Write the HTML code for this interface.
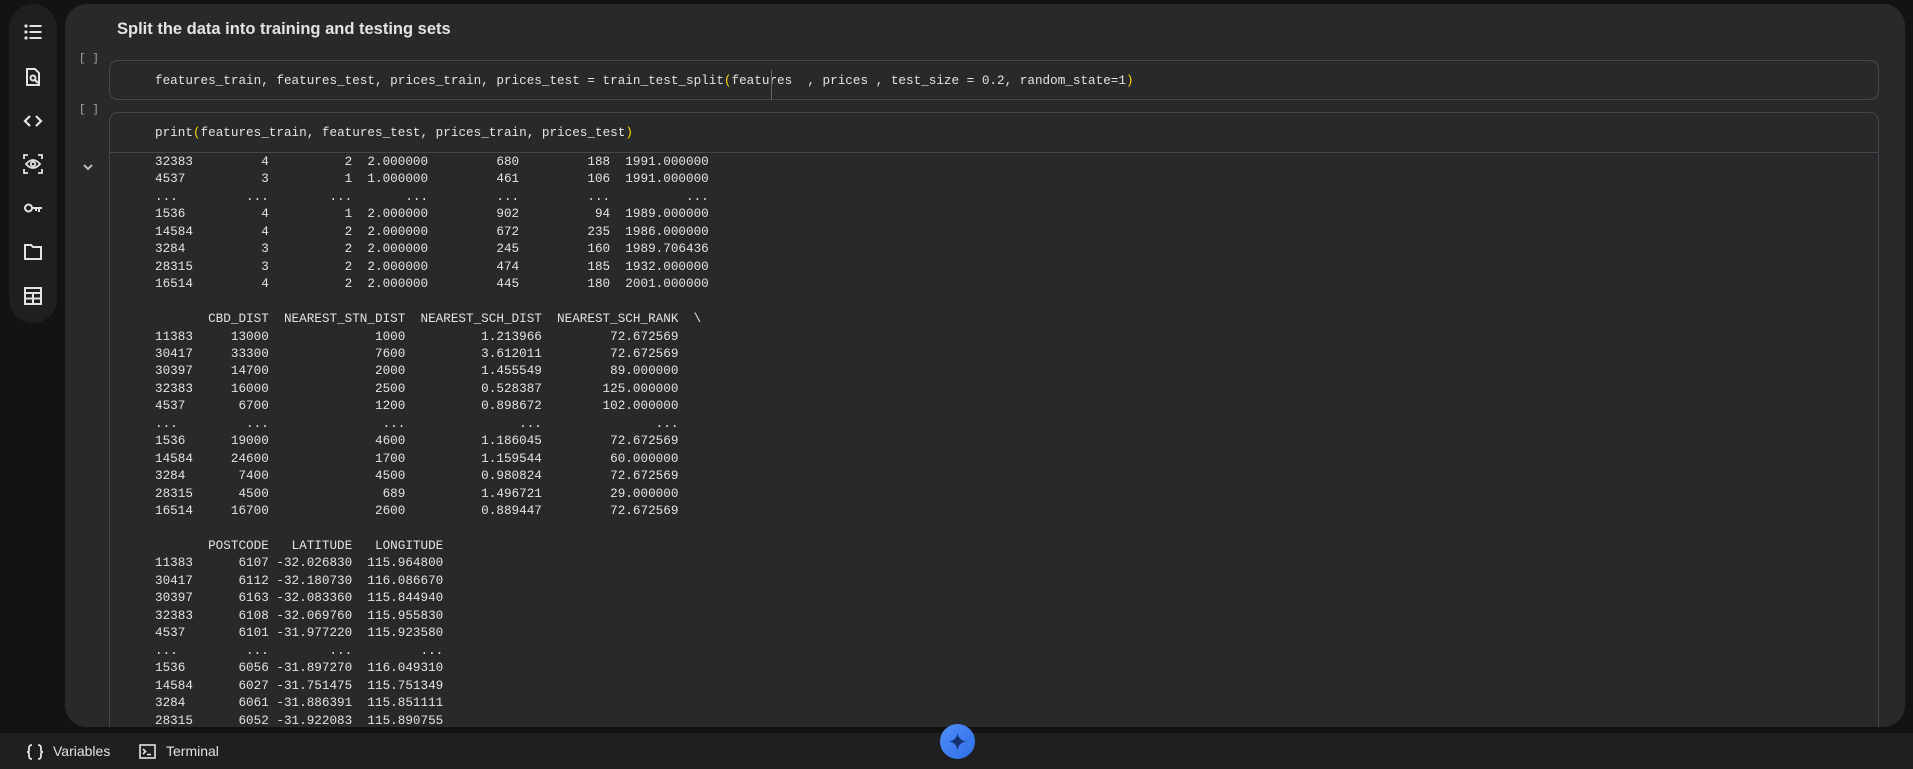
<!DOCTYPE html>
<html><head><meta charset="utf-8"><style>
*{margin:0;padding:0;box-sizing:border-box}
html,body{width:1913px;height:769px;overflow:hidden;background:#131314;font-family:"Liberation Sans",sans-serif;color:#e3e3e3}
#side{position:absolute;left:9px;top:4px;width:48px;height:319px;background:#1e1f20;border-radius:24px}
#side svg{position:absolute;left:14px;width:20px;height:20px}
#panel{position:absolute;left:65px;top:4px;width:1840px;height:723px;background:#28292b;border-radius:22px;overflow:hidden}
.title{position:absolute;left:52px;top:16px;font-size:16.5px;font-weight:bold;color:#e3e3e3}
.br{position:absolute;left:14px;font-family:"Liberation Mono",monospace;font-size:11px;color:#aaa}
.cell{position:absolute;left:44px;width:1770px;border:1px solid #46474a;border-radius:9px}
.code{position:absolute;left:45px;font-family:"Liberation Mono",monospace;font-size:12.65px;color:#e3e3e3;white-space:pre}
.y{color:#ffd700}
pre{position:absolute;left:45px;top:40px;font-family:"Liberation Mono",monospace;font-size:12.65px;line-height:17.45px;color:#e3e3e3}
#bot{position:absolute;left:0;top:733px;width:1913px;height:36px;background:#1e1f20;font-size:14px}
</style></head><body>
<div id="side">
<svg style="top:18px" viewBox="0 0 20 20" fill="#e3e3e3"><circle cx="3" cy="4" r="1.6"/><circle cx="3" cy="10" r="1.6"/><circle cx="3" cy="16" r="1.6"/><rect x="6.5" y="3" width="12" height="2"/><rect x="6.5" y="9" width="12" height="2"/><rect x="6.5" y="15" width="12" height="2"/></svg>
<svg style="top:63px" viewBox="0 0 20 20" fill="none" stroke="#e3e3e3" stroke-width="2"><path d="M4 2h8l4 4v12H4z"/><circle cx="10" cy="11" r="2.5"/><path d="M12 13l3 3"/></svg>
<svg style="top:107px" viewBox="0 0 20 20" fill="none" stroke="#e3e3e3" stroke-width="2.2"><path d="M7 5l-5 5 5 5M13 5l5 5-5 5"/></svg>
<svg style="top:150px" viewBox="0 0 20 20" fill="none" stroke="#e3e3e3" stroke-width="1.8"><path d="M1 5V1h4M15 1h4v4M19 15v4h-4M5 19H1v-4"/><path d="M3 10q7-8 14 0q-7 8-14 0z"/><circle cx="10" cy="10" r="2.2"/></svg>
<svg style="top:194px" viewBox="0 0 20 20" fill="none" stroke="#e3e3e3" stroke-width="2"><circle cx="5.5" cy="10" r="3.5"/><path d="M9 10h10M16 10v4M13 10v3"/></svg>
<svg style="top:238px" viewBox="0 0 20 20" fill="none" stroke="#e3e3e3" stroke-width="2"><path d="M2 3h6l2 2h8v12H2z"/></svg>
<svg style="top:282px" viewBox="0 0 20 20" fill="none" stroke="#e3e3e3" stroke-width="2"><rect x="2" y="2" width="16" height="16"/><path d="M2 7h16M2 12.5h16M10 7v11"/></svg>
</div>
<div id="panel">
<div class="title">Split the data into training and testing sets</div>
<div class="br" style="top:49px">[ ]</div>
<div class="cell" style="top:56px;height:40px">
<div class="code" style="top:12px">features_train, features_test, prices_train, prices_test = train_test_split<span class="y">(</span>features  , prices , test_size = 0.2, random_state=1<span class="y">)</span></div>
<div style="position:absolute;left:661px;top:9px;width:1px;height:30px;background:#666"></div>
</div>
<div class="br" style="top:100px">[ ]</div>
<svg style="position:absolute;left:17px;top:158px" width="12" height="10" viewBox="0 0 12 10"><path d="M2 3l4 4 4-4" fill="none" stroke="#ccc" stroke-width="1.8"/></svg>
<div class="cell" style="top:108px;height:640px;overflow:hidden">
<div style="position:absolute;left:0;top:39px;width:100%;height:1px;background:#46474a"></div>
<div class="code" style="top:12px">print<span class="y">(</span>features_train, features_test, prices_train, prices_test<span class="y">)</span></div>
<pre>32383         4          2  2.000000         680         188  1991.000000
4537          3          1  1.000000         461         106  1991.000000
...         ...        ...       ...         ...         ...          ...
1536          4          1  2.000000         902          94  1989.000000
14584         4          2  2.000000         672         235  1986.000000
3284          3          2  2.000000         245         160  1989.706436
28315         3          2  2.000000         474         185  1932.000000
16514         4          2  2.000000         445         180  2001.000000

       CBD_DIST  NEAREST_STN_DIST  NEAREST_SCH_DIST  NEAREST_SCH_RANK  \
11383     13000              1000          1.213966         72.672569   
30417     33300              7600          3.612011         72.672569   
30397     14700              2000          1.455549         89.000000   
32383     16000              2500          0.528387        125.000000   
4537       6700              1200          0.898672        102.000000   
...         ...               ...               ...               ...   
1536      19000              4600          1.186045         72.672569   
14584     24600              1700          1.159544         60.000000   
3284       7400              4500          0.980824         72.672569   
28315      4500               689          1.496721         29.000000   
16514     16700              2600          0.889447         72.672569   

       POSTCODE   LATITUDE   LONGITUDE  
11383      6107 -32.026830  115.964800  
30417      6112 -32.180730  116.086670  
30397      6163 -32.083360  115.844940  
32383      6108 -32.069760  115.955830  
4537       6101 -31.977220  115.923580  
...         ...        ...         ...  
1536       6056 -31.897270  116.049310  
14584      6027 -31.751475  115.751349  
3284       6061 -31.886391  115.851111  
28315      6052 -31.922083  115.890755  </pre>
</div>
</div>
<div id="bot">
<svg style="position:absolute;left:26px;top:11px" width="18" height="16" viewBox="0 0 18 16" fill="none" stroke="#e3e3e3" stroke-width="1.8"><path d="M6 1Q3 1 3 4v2Q3 8 1 8Q3 8 3 10v2q0 3 3 3M12 1q3 0 3 3v2q0 2 2 2q-2 0-2 2v2q0 3-3 3"/></svg>
<span style="position:absolute;left:53px;top:10px">Variables</span>
<svg style="position:absolute;left:139px;top:11px" width="17" height="15" viewBox="0 0 17 15" fill="none" stroke="#e3e3e3" stroke-width="1.6"><rect x="1" y="1" width="15" height="13"/><path d="M4 5l2.5 2.5L4 10M8 10.5h4"/></svg>
<span style="position:absolute;left:166px;top:10px">Terminal</span>
</div>
<div style="position:absolute;left:940px;top:724px;width:35px;height:35px;border-radius:50%;background:linear-gradient(135deg,#4f8df7,#2f6ee8)">
<svg style="position:absolute;left:9px;top:9px" width="17" height="17" viewBox="0 0 16 16"><path d="M8 0Q9 7 16 8Q9 9 8 16Q7 9 0 8Q7 7 8 0z" fill="#13306e"/></svg>
</div>
</body></html>
